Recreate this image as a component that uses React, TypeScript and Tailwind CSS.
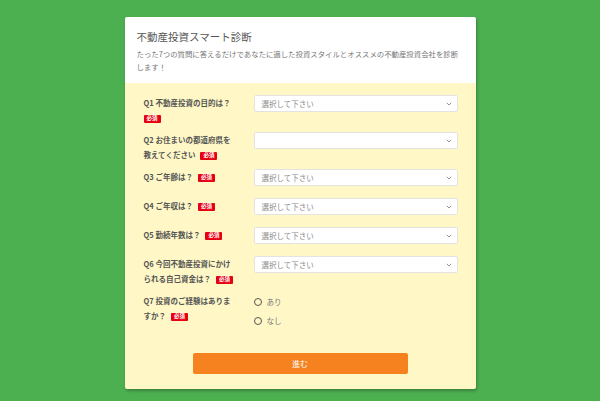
import React from "react";

const font = { fontFamily: '"Noto Sans CJK JP", "Noto Sans", sans-serif' };

const Badge = () => (
  <span className="ml-[5px] inline-flex h-[8px] w-[17px] items-center justify-center rounded-[1px] bg-[#e60012] align-middle text-[5.5px] font-bold leading-none text-white">
    必須
  </span>
);

const Chevron = () => (
  <svg width="6" height="4" viewBox="0 0 6 4" className="text-[#888]">
    <path d="M0.8 0.8 L3 3 L5.2 0.8" fill="none" stroke="currentColor" strokeWidth="0.9" />
  </svg>
);

const Select = ({ placeholder }: { placeholder?: string }) => (
  <div className="flex h-[17px] w-[204px] items-center justify-between rounded-[2px] border border-[#e3e3e3] bg-white pl-[7px] pr-[5px] text-[7.5px] text-[#8a8a8a]">
    <span>{placeholder}</span>
    <Chevron />
  </div>
);

interface RowProps {
  lines: string[];
  badgeOwnLine?: boolean;
  children: React.ReactNode;
}

const Label = ({ lines, badgeOwnLine }: { lines: string[]; badgeOwnLine?: boolean }) => (
  <div className="w-[110px] pr-[17px] text-[7.5px] font-bold leading-[15px] text-[#555]">
    {lines.map((line, i) => (
      <div key={i} className="whitespace-nowrap">
        {line}
        {!badgeOwnLine && i === lines.length - 1 && <Badge />}
      </div>
    ))}
    {badgeOwnLine && (
      <div className="-ml-[5px]">
        <Badge />
      </div>
    )}
  </div>
);

const Row = ({ lines, badgeOwnLine, children }: RowProps) => (
  <div className="flex items-start">
    <Label lines={lines} badgeOwnLine={badgeOwnLine} />
    <div className="h-[22px]">{children}</div>
  </div>
);

const Radio = ({ text }: { text: string }) => (
  <div className="flex h-[19px] items-center gap-[5px] text-[7.5px] text-[#777]">
    <span className="h-[8px] w-[8px] rounded-full border-[1.5px] border-[#555] bg-transparent" />
    <span>{text}</span>
  </div>
);

export default function App() {
  return (
    <div className="flex h-[401px] w-[600px] justify-center bg-[#4caf50] pt-[17px]" style={font}>
      <div className="flex h-[372px] w-[351px] flex-col overflow-hidden rounded-[2px] shadow-[1px_2px_3px_rgba(0,0,0,0.25)]">
        <div className="bg-white pb-[10px] pl-[12px] pr-[6px] pt-[12px]">
          <h1 className="text-[10.5px] leading-[15px] text-[#555]">不動産投資スマート診断</h1>
          <p className="mt-[3px] whitespace-nowrap text-[7.4px] leading-[13px] text-[#777]">
            たった7つの質問に答えるだけであなたに適した投資スタイルとオススメの不動産投資会社を診断
            <br />
            します！
          </p>
        </div>
        <div className="flex flex-1 flex-col bg-[#fff8c6] pl-[19px] pt-[12px]">
          <div className="flex flex-col gap-[7px]">
            <Row lines={["Q1 不動産投資の目的は？"]} badgeOwnLine>
              <Select placeholder="選択して下さい" />
            </Row>
            <Row lines={["Q2 お住まいの都道府県を", "教えてください"]}>
              <Select />
            </Row>
            <Row lines={["Q3 ご年齢は？"]}>
              <Select placeholder="選択して下さい" />
            </Row>
            <Row lines={["Q4 ご年収は？"]}>
              <Select placeholder="選択して下さい" />
            </Row>
            <Row lines={["Q5 勤続年数は？"]}>
              <Select placeholder="選択して下さい" />
            </Row>
            <Row lines={["Q6 今回不動産投資にかけ", "られる自己資金は？"]}>
              <Select placeholder="選択して下さい" />
            </Row>
            <div className="flex items-start">
              <Label lines={["Q7 投資のご経験はありま", "すか？"]} />
              <div className="-mt-px flex flex-col">
                <Radio text="あり" />
                <Radio text="なし" />
              </div>
            </div>
          </div>
          <div className="mt-[23px] flex justify-center pr-[19px]">
            <button className="h-[21px] w-[215px] rounded-[2px] bg-[#f5821f] text-[8px] text-white">進む</button>
          </div>
        </div>
      </div>
    </div>
  );
}
